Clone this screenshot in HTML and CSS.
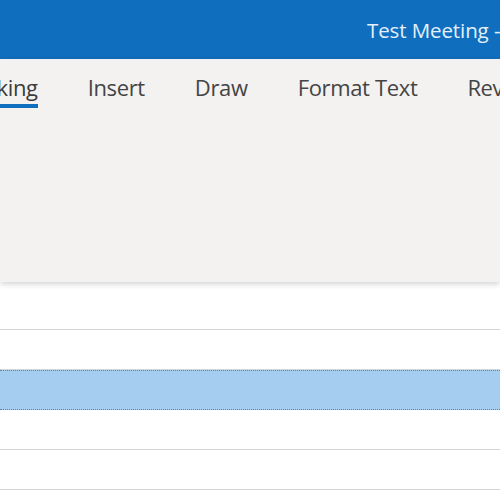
FILE: index.html
```html
<!DOCTYPE html>
<html>
<head>
<meta charset="utf-8">
<link rel="stylesheet" href="styles.css">
</head>
<body>
<div class="app">
  <header class="titlebar">
    <span class="title">Test Meeting - Meeting</span>
  </header>
  <nav class="ribbon">
    <div class="tabs">
      <span class="tab active">Tracking</span>
      <span class="tab">Insert</span>
      <span class="tab">Draw</span>
      <span class="tab">Format Text</span>
      <span class="tab">Review</span>
    </div>
  </nav>
  <main class="content">
    <div class="row"></div>
    <div class="row"></div>
    <div class="row selected"></div>
    <div class="row"></div>
    <div class="row"></div>
  </main>
</div>
</body>
</html>
```
FILE: styles.css
```css
html, body {
  margin: 0;
  padding: 0;
  background: #ffffff;
  overflow: hidden;
}
.app {
  width: 500px;
  height: 500px;
  display: flex;
  flex-direction: column;
  font-family: "Open Sans", "Noto Sans", sans-serif;
  overflow: hidden;
}
.titlebar {
  height: 59px;
  flex: none;
  background: #106ebe;
  display: flex;
  align-items: center;
  padding-left: 367px;
  white-space: nowrap;
  overflow: hidden;
}
.title {
  color: #e4f0fb;
  font-size: 20.5px;
  letter-spacing: -0.1px;
}
.ribbon {
  height: 223px;
  flex: none;
  background: #f3f2f1;
  box-shadow: 0 2px 6px rgba(0,0,0,0.18);
  position: relative;
  z-index: 1;
  overflow: hidden;
}
.tabs {
  display: flex;
  margin-left: -46px;
  white-space: nowrap;
  padding-top: 13px;
}
.tab {
  font-size: 22px;
  color: #444444;
  letter-spacing: -0.35px;
  padding-bottom: 2px;
  margin-right: 50px;
  border-bottom: 4px solid transparent;
  line-height: 30px;
}
.tab.active {
  border-bottom-color: #106ebe;
  color: #3b3b3b;
}
.content {
  flex: 1;
  display: flex;
  flex-direction: column;
  padding-top: 8px;
}
.row {
  height: 39px;
  border-bottom: 1px solid #d6d6d6;
  flex: none;
}
.row.selected {
  background: #a5cdef;
  border-top: 1px dotted #6a7f95;
  border-bottom: 1px dotted #6a7f95;
  height: 38px;
}
```
